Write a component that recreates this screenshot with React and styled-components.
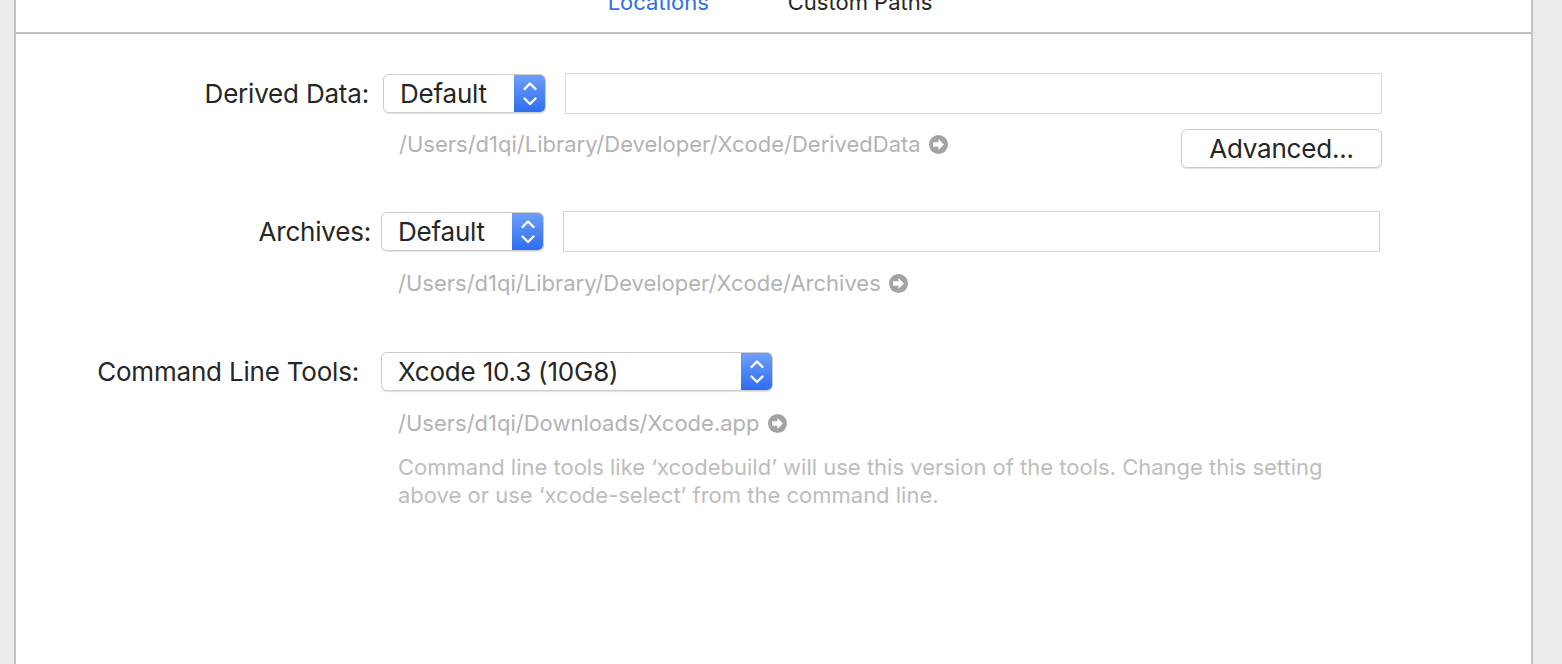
import React from "react";
import styled, { createGlobalStyle } from "styled-components";

const Global = createGlobalStyle`
  html, body { margin: 0; padding: 0; height: 100%; overflow: hidden; }
  body { background: #ececec; font-family: Inter, "Noto Sans", "Liberation Sans", sans-serif; }
  #root { height: 100%; }
`;

const Window = styled.div`
  margin-left: 14px;
  width: 1515px;
  height: 100%;
  background: #ffffff;
  border-left: 2px solid #c4c4c4;
  border-right: 2px solid #c4c4c4;
`;

const TabBar = styled.div`
  height: 32px;
  display: flex;
  justify-content: center;
  align-items: flex-start;
  gap: 79px;
  border-bottom: 2px solid #c0c0c0;
  overflow: hidden;
  padding-right: 7px;
`;

const Tab = styled.div`
  margin-top: -9px;
  font-size: 22px;
  line-height: 22px;
  color: ${(p) => (p.$active ? "#2f6fdf" : "#262626")};
`;

const Content = styled.div`
  display: flex;
  flex-direction: column;
  padding-top: 39px;
`;

const Section = styled.div`
  display: flex;
  flex-direction: column;
  margin-top: ${(p) => p.$before || 0}px;
`;

const Row = styled.div`
  display: flex;
  align-items: center;
  height: 41px;
`;

const Label = styled.div`
  width: 355px;
  box-sizing: border-box;
  padding-right: ${(p) => p.$pad || 0}px;
  margin-right: 10px;
  text-align: right;
  font-size: 26px;
  letter-spacing: -0.2px;
  color: #262626;
  white-space: nowrap;
`;

const Popup = styled.div`
  display: flex;
  width: ${(p) => p.$w}px;
  height: 39px;
  margin-left: ${(p) => p.$shift || 0}px;
  box-sizing: border-box;
  border: 1px solid #cdcdcd;
  border-radius: 6px;
  background: #fff;
  box-shadow: 0 1px 1px rgba(0, 0, 0, 0.12);
  overflow: hidden;
`;

const PopupValue = styled.div`
  flex: 1;
  display: flex;
  align-items: center;
  padding-left: 16px;
  font-size: 26px;
  letter-spacing: -0.2px;
  color: #262626;
  white-space: nowrap;
`;

const Stepper = styled.div`
  width: 32px;
  flex: none;
  margin: -1px -1px -1px 0;
  background: linear-gradient(#6fa0f8, #2c6cf1);
  border-radius: 0 6px 6px 0;
  display: flex;
  align-items: center;
  justify-content: center;
`;

const Field = styled.div`
  width: ${(p) => p.$w}px;
  height: 41px;
  margin-left: ${(p) => p.$gap}px;
  box-sizing: border-box;
  border: 1px solid #d8d8d8;
  background: #fff;
`;

const SubRow = styled.div`
  display: flex;
  align-items: flex-start;
  margin-left: ${(p) => p.$left}px;
  margin-top: ${(p) => p.$top}px;
  width: ${(p) => p.$w || "auto"};
`;

const PathText = styled.div`
  display: flex;
  align-items: center;
  gap: 8px;
  margin-left: ${(p) => p.$indent || 0}px;
  margin-top: ${(p) => p.$drop || 0}px;
  font-size: 22px;
  line-height: 28px;
  color: #b3b3b3;
  white-space: nowrap;
`;

const Spacer = styled.div`
  flex: 1;
`;

const Button = styled.div`
  width: 201px;
  height: 39px;
  box-sizing: border-box;
  border: 1px solid #cbcbcb;
  border-radius: 6px;
  background: #fff;
  box-shadow: 0 1px 1px rgba(0, 0, 0, 0.12);
  display: flex;
  align-items: center;
  justify-content: center;
  font-size: 26px;
  letter-spacing: -0.2px;
  color: #262626;
`;

const Note = styled.div`
  margin-left: 382px;
  margin-top: 16px;
  font-size: 22px;
  line-height: 28px;
  color: #bdbdbd;
`;

const Chevrons = () => (
  <svg width="32" height="39" viewBox="0 0 32 39">
    <polyline points="10.5,15 16,9.5 21.5,15" fill="none" stroke="#fff" strokeWidth="2.4" strokeLinecap="round" strokeLinejoin="round" />
    <polyline points="10.5,24.5 16,30 21.5,24.5" fill="none" stroke="#fff" strokeWidth="2.4" strokeLinecap="round" strokeLinejoin="round" />
  </svg>
);

const GoArrow = () => (
  <svg width="19" height="19" viewBox="0 0 19 19">
    <circle cx="9.5" cy="9.5" r="9.5" fill="#a3a3a3" />
    <path d="M4 7.3h5.4V4l5.6 5.5-5.6 5.5v-3.3H4z" fill="#fff" />
  </svg>
);

const PopupButton = ({ value, w, shift }) => (
  <Popup $w={w} $shift={shift}>
    <PopupValue>{value}</PopupValue>
    <Stepper>
      <Chevrons />
    </Stepper>
  </Popup>
);

export default function App() {
  return (
    <>
      <Global />
      <Window>
        <TabBar>
          <Tab $active>Locations</Tab>
          <Tab>Custom Paths</Tab>
        </TabBar>
        <Content>
          <Section>
            <Row>
              <Label $pad={2}>Derived Data:</Label>
              <PopupButton value="Default" w={163} shift={2} />
              <Field $w={817} $gap={19} />
            </Row>
            <SubRow $left={367} $top={15} $w="999px">
              <PathText $indent={16} $drop={1}>
                /Users/d1qi/Library/Developer/Xcode/DerivedData <GoArrow />
              </PathText>
              <Spacer />
              <Button>Advanced...</Button>
            </SubRow>
          </Section>
          <Section $before={43}>
            <Row>
              <Label>Archives:</Label>
              <PopupButton value="Default" w={163} />
              <Field $w={817} $gap={19} />
            </Row>
            <SubRow $left={382} $top={17}>
              <PathText>
                /Users/d1qi/Library/Developer/Xcode/Archives <GoArrow />
              </PathText>
            </SubRow>
          </Section>
          <Section $before={54}>
            <Row>
              <Label $pad={12}>Command Line Tools:</Label>
              <PopupButton value="Xcode 10.3 (10G8)" w={392} />
            </Row>
            <SubRow $left={382} $top={17}>
              <PathText>
                /Users/d1qi/Downloads/Xcode.app <GoArrow />
              </PathText>
            </SubRow>
            <Note>
              Command line tools like ‘xcodebuild’ will use this version of the tools. Change this setting
              <br />
              above or use ‘xcode-select’ from the command line.
            </Note>
          </Section>
        </Content>
      </Window>
    </>
  );
}
